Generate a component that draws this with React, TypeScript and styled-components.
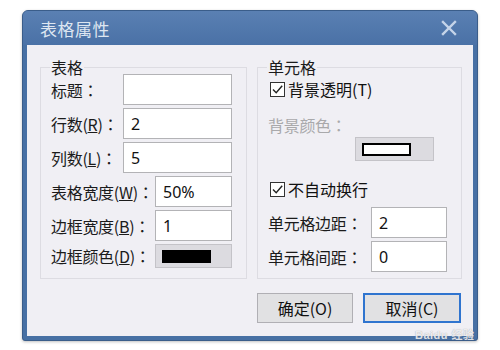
import styled, { createGlobalStyle } from "styled-components"

const GlobalStyle = createGlobalStyle`
  html, body {
    margin: 0;
    padding: 0;
    background: #ffffff;
  }
  body {
    font-family: "Noto Sans", "Noto Sans CJK SC", sans-serif;
  }
`

const Page = styled.div`
  width: 500px;
  height: 350px;
  padding: 10px 0 0 22px;
  box-sizing: border-box;
`

const Window = styled.div`
  position: relative;
  width: 456px;
  height: 331px;
  display: flex;
  flex-direction: column;
  background: #4770a4;
  border: 1px solid #3a5d8a;
  border-radius: 6px 6px 3px 3px;
  box-sizing: border-box;
  box-shadow: 0 1px 3px rgba(0, 0, 0, 0.25);
`

const TitleBar = styled.div`
  height: 34px;
  flex: none;
  display: flex;
  align-items: center;
  justify-content: space-between;
  padding: 0 20px 0 17px;
  background: linear-gradient(#5a80b3, #4a71a6);
  border-radius: 5px 5px 0 0;
`

const Title = styled.span`
  font-family: "Noto Sans CJK SC", sans-serif;
  font-size: 17px;
  color: #dde6f1;
  letter-spacing: 0.5px;
`

const Body = styled.div`
  flex: 1;
  margin: 0 4px 4px;
  background: #f0eff4;
  padding: 15px 11px 0 13px;
  display: grid;
  grid-template-columns: 207px 205px;
  grid-template-rows: auto auto;
  column-gap: 10px;
  align-content: start;
`

const Group = styled.fieldset<{ $gap: number; $padBottom: number }>`
  margin: 0;
  min-width: 0;
  padding: 0 14px ${(p) => p.$padBottom}px 10px;
  border: 1px solid #dddce2;
  display: flex;
  flex-direction: column;
  gap: ${(p) => p.$gap}px;
`

const Legend = styled.legend`
  padding: 0 1px;
  margin-left: -1px;
  font-family: "Noto Sans CJK SC", sans-serif;
  font-size: 16px;
  line-height: 14px;
  color: #1b1b1b;
`

const Row = styled.div<{ $h?: number }>`
  display: flex;
  align-items: center;
  height: ${(p) => p.$h ?? 31}px;
`

const Label = styled.span<{ $w: number; $disabled?: boolean }>`
  flex: none;
  width: ${(p) => p.$w}px;
  font-family: "Noto Sans CJK SC", sans-serif;
  font-size: 16px;
  color: ${(p) => (p.$disabled ? "#a9a9ab" : "#1b1b1b")};
  white-space: nowrap;
  letter-spacing: -0.3px;
`

const Colon = styled.span`
  font-family: "Noto Sans CJK JP", sans-serif;
`

const Input = styled.div`
  flex: 1;
  height: 31px;
  box-sizing: border-box;
  background: #ffffff;
  border: 1px solid #b3b3b6;
  padding: 0 7px;
  display: flex;
  align-items: center;
  font-family: "Noto Sans", sans-serif;
  font-size: 16px;
  color: #111111;
`

const ColorBox = styled.div<{ $w?: number }>`
  flex: ${(p) => (p.$w ? "none" : "1")};
  width: ${(p) => (p.$w ? `${p.$w}px` : "auto")};
  height: 24px;
  box-sizing: border-box;
  background: #dcdbe0;
  border: 1px solid #c4c3c8;
  padding: 0 0 0 6px;
  display: flex;
  align-items: center;
`

const Swatch = styled.div<{ $color: string }>`
  width: 49px;
  height: 13px;
  box-sizing: border-box;
  background: ${(p) => p.$color};
  border: 2px solid #000000;
`

const CheckRow = styled.div<{ $mt?: number }>`
  display: flex;
  align-items: center;
  height: 30px;
  margin-top: ${(p) => p.$mt ?? 0}px;
  gap: 3px;
  padding-left: 2px;
  font-family: "Noto Sans CJK SC", sans-serif;
  font-size: 16px;
  color: #111111;
`

const Box = styled.span`
  width: 15px;
  height: 15px;
  box-sizing: border-box;
  border: 1px solid #333333;
  background: #ffffff;
  display: flex;
  align-items: center;
  justify-content: center;
`

const Spacer = styled.div<{ $h: number }>`
  height: ${(p) => p.$h}px;
`

const Indent = styled.div<{ $left: number }>`
  display: flex;
  padding-left: ${(p) => p.$left}px;
`

const Buttons = styled.div`
  grid-column: 2;
  display: flex;
  gap: 10px;
  margin-top: 14px;
`

const Button = styled.div<{ $focused?: boolean }>`
  width: ${(p) => (p.$focused ? 98 : 96)}px;
  height: 30px;
  box-sizing: border-box;
  background: #e1e1e3;
  border: ${(p) => (p.$focused ? "2px solid #2f74cf" : "1px solid #b0afb4")};
  display: flex;
  align-items: center;
  justify-content: center;
  font-family: "Noto Sans CJK SC", sans-serif;
  font-size: 16px;
  color: #111111;
`

const Watermark = styled.span`
  position: absolute;
  left: 392px;
  top: 318px;
  font-family: "Liberation Sans", "Noto Sans CJK SC", sans-serif;
  font-size: 11px;
  line-height: 12px;
  font-weight: bold;
  color: rgba(255, 255, 255, 0.8);
  text-shadow: 0 0 1px rgba(120, 120, 130, 0.7);
  letter-spacing: 0.5px;
`

const Check = () => (
  <svg width="13" height="13" viewBox="0 0 13 13">
    <path d="M2 6.5 L5.2 9.7 L11.2 2.8" fill="none" stroke="#222" strokeWidth="1.4" />
  </svg>
)

const CloseIcon = () => (
  <svg width="16" height="16" viewBox="0 0 16 16">
    <path d="M2 2 L14 14 M14 2 L2 14" stroke="#c5d4e9" strokeWidth="2.4" strokeLinecap="square" />
  </svg>
)

const App = () => {
  return (
    <>
      <GlobalStyle />
      <Page>
        <Window>
          <TitleBar>
            <Title>表格属性</Title>
            <CloseIcon />
          </TitleBar>
          <Body>
            <Group $gap={3} $padBottom={9}>
              <Legend>表格</Legend>
              <Row>
                <Label $w={72}>
                  标题<Colon>：</Colon>
                </Label>
                <Input />
              </Row>
              <Row>
                <Label $w={72}>
                  行数(<u>R</u>)<Colon>：</Colon>
                </Label>
                <Input>2</Input>
              </Row>
              <Row>
                <Label $w={72}>
                  列数(<u>L</u>)<Colon>：</Colon>
                </Label>
                <Input>5</Input>
              </Row>
              <Row>
                <Label $w={104}>
                  表格宽度(<u>W</u>)<Colon>：</Colon>
                </Label>
                <Input>50%</Input>
              </Row>
              <Row>
                <Label $w={104}>
                  边框宽度(<u>B</u>)<Colon>：</Colon>
                </Label>
                <Input>1</Input>
              </Row>
              <Row $h={24}>
                <Label $w={104}>
                  边框颜色(<u>D</u>)<Colon>：</Colon>
                </Label>
                <ColorBox>
                  <Swatch $color="#000000" />
                </ColorBox>
              </Row>
            </Group>
            <Group $gap={0} $padBottom={6}>
              <Legend>单元格</Legend>
              <CheckRow>
                <Box>
                  <Check />
                </Box>
                背景透明(T)
              </CheckRow>
              <Spacer $h={9} />
              <Row $h={24}>
                <Label $w={100} $disabled>
                  背景颜色<Colon>：</Colon>
                </Label>
              </Row>
              <Indent $left={87}>
                <ColorBox $w={79}>
                  <Swatch $color="#ffffff" />
                </ColorBox>
              </Indent>
              <CheckRow $mt={13}>
                <Box>
                  <Check />
                </Box>
                不自动换行
              </CheckRow>
              <Spacer $h={3} />
              <Row>
                <Label $w={103}>
                  单元格边距<Colon>：</Colon>
                </Label>
                <Input>2</Input>
              </Row>
              <Spacer $h={3} />
              <Row>
                <Label $w={103}>
                  单元格间距<Colon>：</Colon>
                </Label>
                <Input>0</Input>
              </Row>
            </Group>
            <Buttons>
              <Button>确定(O)</Button>
              <Button $focused>取消(C)</Button>
            </Buttons>
          </Body>
          <Watermark>Baidu 经验</Watermark>
        </Window>
      </Page>
    </>
  )
}

export default App
